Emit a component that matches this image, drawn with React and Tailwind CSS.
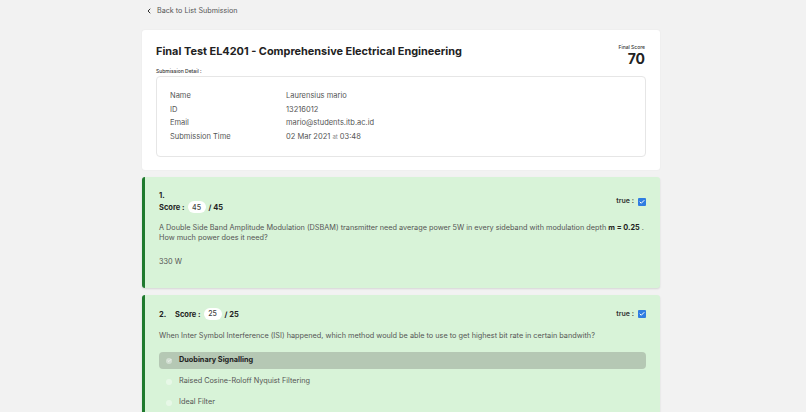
import React from "react"
import { ChevronLeft, Check } from "lucide-react"

const details = [
  ["Name", "Laurensius mario"],
  ["ID", "13216012"],
  ["Email", "mario@students.itb.ac.id"],
]

const options = [
  { label: "Duobinary Signalling", picked: true },
  { label: "Raised Cosine-Roloff Nyquist Filtering" },
  { label: "Ideal Filter" },
]

function TrueBox() {
  return (
    <div className="flex items-center gap-1 text-[7px] font-semibold text-[#333]">
      <span>true :</span>
      <span className="flex h-[8px] w-[8px] items-center justify-center rounded-[1px] bg-[#2f7de1]">
        <Check size={6} strokeWidth={4} className="text-white" />
      </span>
    </div>
  )
}

function ScorePill({ value }) {
  return (
    <span className="mx-[3px] inline-flex h-[12px] w-[18px] items-center justify-center rounded-full bg-white text-[7px] font-medium text-[#444]">
      {value}
    </span>
  )
}

export default function App() {
  return (
    <div
      className="min-h-screen bg-[#f2f2f2] text-[#444]"
      style={{ fontFamily: "Inter, 'Noto Sans', sans-serif" }}
    >
      <div className="ml-[142px] w-[518px] pt-[6px]">
        {/* back link */}
        <div className="flex items-center gap-[4px] pl-[3px] text-[7.2px] text-[#555]">
          <ChevronLeft size={8} strokeWidth={3} className="text-[#333]" />
          <span>Back to List Submission</span>
        </div>

        {/* header card */}
        <div className="mt-[13px] rounded-[3px] bg-white px-[14px] pb-[13px] pt-[12px] shadow-[0_0_2px_rgba(0,0,0,0.06)]">
          <div className="flex items-start justify-between">
            <h1 className="mt-[2px] text-[10.9px] font-bold leading-[14px] text-[#222]">
              Final Test EL4201 - Comprehensive Electrical Engineering
            </h1>
            <div className="flex flex-col items-end pt-[2px] pr-[1px]">
              <span className="text-[5px] font-medium leading-[7px] text-[#333]">Final Score</span>
              <span className="mt-[1px] text-[14px] font-bold leading-[14px] text-[#222]">70</span>
            </div>
          </div>
          <div className="mt-[2px] text-[5px] font-medium leading-[7px] text-[#333]">Submission Detail :</div>
          <div className="mt-[1px] rounded-[4px] border border-[#e6e6e6] px-[13px] pb-[13px] pt-[12px] text-[7.5px] text-[#555]">
            {details.map(([k, v]) => (
              <div key={k} className="flex h-[13.6px] items-center">
                <span className="w-[116px]">{k}</span>
                <span>{v}</span>
              </div>
            ))}
            <div className="flex h-[13.6px] items-center">
              <span className="w-[116px]">Submission Time</span>
              <span>
                02 Mar 2021 <span className="text-[6px] text-[#888]">at</span> 03:48
              </span>
            </div>
          </div>
        </div>

        {/* question 1 */}
        <div className="mt-[7px] rounded-[3px] border-l-[3px] border-[#1f7a2e] bg-[#d8f3d8] px-[14px] pb-[21px] pt-[13px] shadow-[0_1px_2px_rgba(0,0,0,0.12)]">
          <div className="flex items-center justify-between">
            <div className="text-[7.5px] font-bold leading-[11px] text-[#222]">
              <div>1.</div>
              <div className="flex h-[12px] items-center">
                Score :<ScorePill value="45" /> / 45
              </div>
            </div>
            <TrueBox />
          </div>
          <p className="mt-[10px] text-[7.3px] leading-[10px] text-[#555]">
            A Double Side Band Amplitude Modulation (DSBAM) transmitter need average power 5W in every sideband with modulation depth{" "}
            <b className="text-[#222]">m = 0.25</b> .
            <br />
            How much power does it need?
          </p>
          <p className="mt-[14px] text-[7.3px] leading-[10px] text-[#555]">330 W</p>
        </div>

        {/* question 2 */}
        <div className="mt-[7px] rounded-[3px] border-l-[3px] border-[#1f7a2e] bg-[#d8f3d8] px-[14px] pb-[20px] pt-[13px] shadow-[0_1px_2px_rgba(0,0,0,0.12)]">
          <div className="flex h-[12px] items-center justify-between">
            <div className="flex items-center text-[7.5px] font-bold text-[#222]">
              <span className="w-[16px]">2.</span>
              Score :<ScorePill value="25" /> / 25
            </div>
            <TrueBox />
          </div>
          <p className="mt-[11px] text-[7.3px] leading-[10px] text-[#555]">
            When Inter Symbol Interference (ISI) happened, which method would be able to use to get highest bit rate in certain bandwith?
          </p>
          <div className="mt-[11px] flex flex-col gap-[4px]">
            {options.map((o) => (
              <div
                key={o.label}
                className={`flex h-[17px] items-center gap-[7px] rounded-[4px] px-[7px] text-[7.3px] ${
                  o.picked ? "bg-[#b5c8b4] font-bold text-[#222]" : "text-[#555]"
                }`}
              >
                <span className="flex h-[6px] w-[6px] items-center justify-center rounded-full bg-white/40">
                  {o.picked && <Check size={5} strokeWidth={3} className="text-white" />}
                </span>
                <span>{o.label}</span>
              </div>
            ))}
          </div>
        </div>
      </div>
    </div>
  )
}
